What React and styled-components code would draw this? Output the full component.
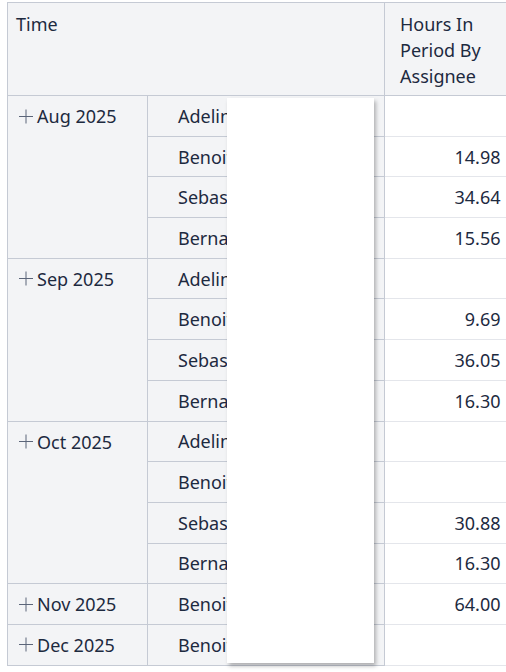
import styled, { createGlobalStyle } from "styled-components";

const GlobalStyle = createGlobalStyle`
    html, body {
        margin: 0;
        padding: 0;
        background: #ffffff;
    }
    body {
        font-family: "Noto Sans", "Open Sans", sans-serif;
        color: #1d2a3f;
    }
`

const Page = styled.div`
    position: relative;
    width: 506px;
    height: 672px;
    overflow: hidden;
    padding: 2px 0 0 7px;
    box-sizing: border-box;
`

const Table = styled.table`
    border-collapse: collapse;
    table-layout: fixed;
    width: 505px;
    font-size: 18px;
    line-height: 26px;
    border-bottom: 1px solid #c5cad4;
`

const HeadCell = styled.th`
    background: #f3f4f6;
    border: 1px solid #c5cad4;
    font-weight: 400;
    text-align: left;
    vertical-align: top;
    padding: 8px ${p => (p.$first ? "8px" : "15px")} 6px;
    height: 78px;
`

const Row = styled.tr`
    height: 40.7px;
`

const MonthCell = styled.td`
    background: #f3f4f6;
    border: 1px solid #c5cad4;
    vertical-align: top;
    padding: 7px 0 0 11px;
`

const Month = styled.div`
    display: flex;
    align-items: center;
    gap: 4px;
`

const NameCell = styled.td`
    background: #f3f4f6;
    border-top: 1px solid #c5cad4;
    border-bottom: 1px solid #c5cad4;
    padding: 0 0 0 30px;
    white-space: nowrap;
    overflow: hidden;
`

const ValueCell = styled.td`
    background: #ffffff;
    border-top: 1px solid #e4e6eb;
    border-bottom: 1px solid #e4e6eb;
    border-left: 1px solid #c5cad4;
    text-align: right;
    padding: 0 12px 0 0;
`

const Popup = styled.div`
    position: absolute;
    left: 227px;
    top: 98px;
    width: 147px;
    height: 565px;
    background: #ffffff;
    box-shadow: 2px 3px 4px rgba(0, 0, 0, 0.28);
`

const Plus = () => (
    <svg width="14" height="15" viewBox="0 0 14 15">
        <path d="M7 0.5V14.5M0 7.5H14" stroke="#5b6579" strokeWidth="1" fill="none" />
    </svg>
)

const data = [
    { month: "Aug 2025", rows: [["Adeline", ""], ["Benoit", "14.98"], ["Sebastien", "34.64"], ["Bernard", "15.56"]] },
    { month: "Sep 2025", rows: [["Adeline", ""], ["Benoit", "9.69"], ["Sebastien", "36.05"], ["Bernard", "16.30"]] },
    { month: "Oct 2025", rows: [["Adeline", ""], ["Benoit", ""], ["Sebastien", "30.88"], ["Bernard", "16.30"]] },
    { month: "Nov 2025", rows: [["Benoit", "64.00"]] },
    { month: "Dec 2025", rows: [["Benoit", ""]] },
]

const App = () => {
    return (
        <Page>
            <GlobalStyle />
            <Table>
                <colgroup>
                    <col style={{ width: 140 }} />
                    <col style={{ width: 237 }} />
                    <col style={{ width: 128 }} />
                </colgroup>
                <thead>
                    <tr>
                        <HeadCell colSpan={2} $first>Time</HeadCell>
                        <HeadCell>Hours In<br />Period By<br />Assignee</HeadCell>
                    </tr>
                </thead>
                <tbody>
                    {data.map(group =>
                        group.rows.map(([name, value], i) => (
                            <Row key={group.month + name}>
                                {i === 0 && (
                                    <MonthCell rowSpan={group.rows.length}>
                                        <Month><Plus />{group.month}</Month>
                                    </MonthCell>
                                )}
                                <NameCell>{name}</NameCell>
                                <ValueCell>{value}</ValueCell>
                            </Row>
                        ))
                    )}
                </tbody>
            </Table>
            <Popup />
        </Page>
    )
}

export default App
